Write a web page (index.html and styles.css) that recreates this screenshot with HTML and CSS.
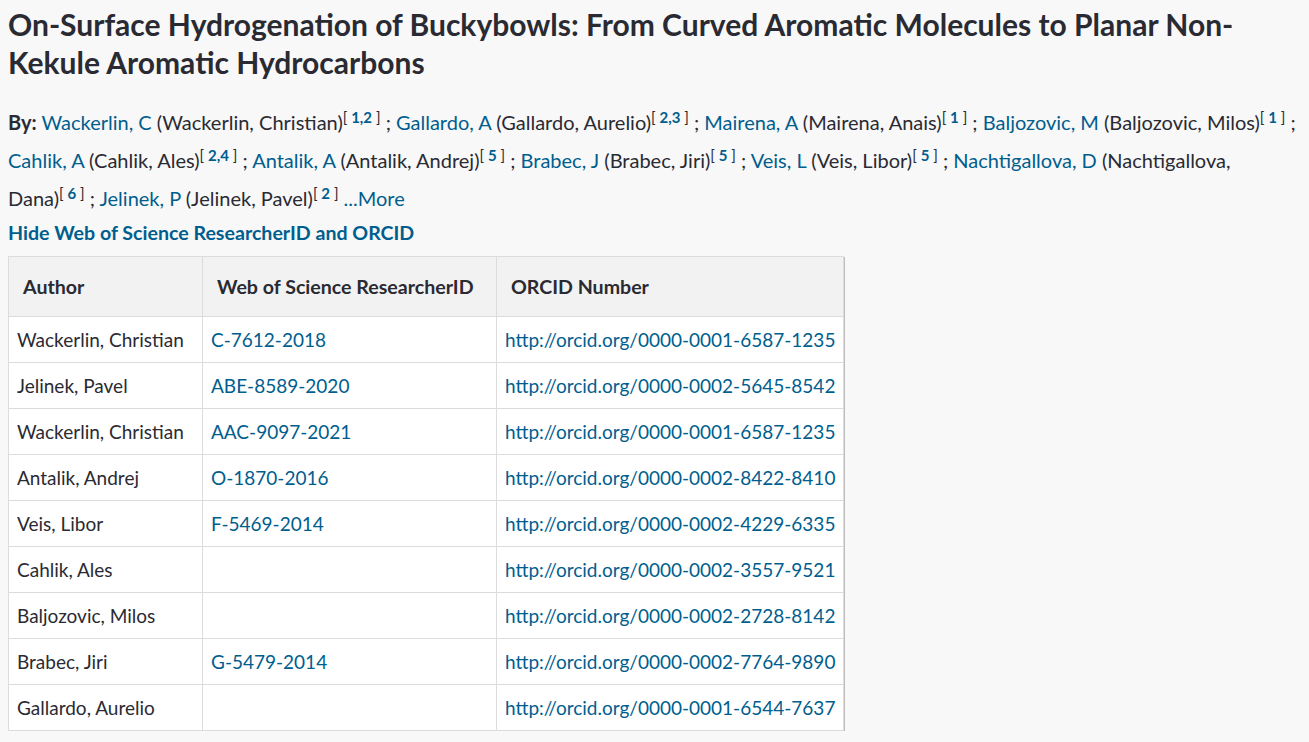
FILE: index.html
```html
<!DOCTYPE html>
<html>
<head>
<meta charset="utf-8">
<link rel="stylesheet" href="styles.css">
</head>
<body>
<div class="page">
  <h1 class="title">On-Surface Hydrogenation of Buckybowls: From Curved Aromatic Molecules to Planar Non-Kekule Aromatic Hydrocarbons</h1>
  <p class="authors"><span class="by">By:</span> <a class="lnk">Wackerlin, C</a> (Wackerlin, <span class="nw">Christian)<sup><span class="br">[</span> <b>1,2</b> <span class="br">]</span></sup> ;</span> <a class="lnk">Gallardo, A</a> (Gallardo, <span class="nw">Aurelio)<sup><span class="br">[</span> <b>2,3</b> <span class="br">]</span></sup> ;</span> <a class="lnk">Mairena, A</a> (Mairena, <span class="nw">Anais)<sup><span class="br">[</span> <b>1</b> <span class="br">]</span></sup> ;</span> <a class="lnk">Baljozovic, M</a> (Baljozovic, <span class="nw">Milos)<sup><span class="br">[</span> <b>1</b> <span class="br">]</span></sup> ;</span> <a class="lnk">Cahlik, A</a> (Cahlik, <span class="nw">Ales)<sup><span class="br">[</span> <b>2,4</b> <span class="br">]</span></sup> ;</span> <a class="lnk">Antalik, A</a> (Antalik, <span class="nw">Andrej)<sup><span class="br">[</span> <b>5</b> <span class="br">]</span></sup> ;</span> <a class="lnk">Brabec, J</a> (Brabec, <span class="nw">Jiri)<sup><span class="br">[</span> <b>5</b> <span class="br">]</span></sup> ;</span> <a class="lnk">Veis, L</a> (Veis, <span class="nw">Libor)<sup><span class="br">[</span> <b>5</b> <span class="br">]</span></sup> ;</span> <a class="lnk">Nachtigallova, D</a> (Nachtigallova, <span class="nw">Dana)<sup><span class="br">[</span> <b>6</b> <span class="br">]</span></sup> ;</span> <a class="lnk">Jelinek, P</a> (Jelinek, <span class="nw">Pavel)<sup><span class="br">[</span> <b>2</b> <span class="br">]</span></sup></span> <a class="lnk">...More</a></p>
  <a class="hide">Hide Web of Science ResearcherID and ORCID</a>
  <table class="ids">
    <thead>
      <tr><th class="c1">Author</th><th class="c2">Web of Science ResearcherID</th><th class="c3">ORCID Number</th></tr>
    </thead>
    <tbody>
      <tr><td>Wackerlin, Christian</td><td><a class="lnk">C-7612-2018</a></td><td><a class="lnk">http://orcid.org/0000-0001-6587-1235</a></td></tr>
      <tr><td>Jelinek, Pavel</td><td><a class="lnk">ABE-8589-2020</a></td><td><a class="lnk">http://orcid.org/0000-0002-5645-8542</a></td></tr>
      <tr><td>Wackerlin, Christian</td><td><a class="lnk">AAC-9097-2021</a></td><td><a class="lnk">http://orcid.org/0000-0001-6587-1235</a></td></tr>
      <tr><td>Antalik, Andrej</td><td><a class="lnk">O-1870-2016</a></td><td><a class="lnk">http://orcid.org/0000-0002-8422-8410</a></td></tr>
      <tr><td>Veis, Libor</td><td><a class="lnk">F-5469-2014</a></td><td><a class="lnk">http://orcid.org/0000-0002-4229-6335</a></td></tr>
      <tr><td>Cahlik, Ales</td><td></td><td><a class="lnk">http://orcid.org/0000-0002-3557-9521</a></td></tr>
      <tr><td>Baljozovic, Milos</td><td></td><td><a class="lnk">http://orcid.org/0000-0002-2728-8142</a></td></tr>
      <tr><td>Brabec, Jiri</td><td><a class="lnk">G-5479-2014</a></td><td><a class="lnk">http://orcid.org/0000-0002-7764-9890</a></td></tr>
      <tr><td>Gallardo, Aurelio</td><td></td><td><a class="lnk">http://orcid.org/0000-0001-6544-7637</a></td></tr>
    </tbody>
  </table>
</div>
</body>
</html>
```

FILE: styles.css
```css
html, body {
  margin: 0;
  padding: 0;
  background: #f8f8f8;
}
body {
  font-family: "Lato", "Liberation Sans", sans-serif;
  color: #2a2a33;
}
.page {
  padding: 5px 8px 0 8px;
}
.title {
  margin: 0;
  font-size: 30px;
  font-weight: 700;
  line-height: 38px;
  color: #2a2a33;
}
.authors {
  margin: 22px 0 0 0;
  font-size: 20px;
  line-height: 38px;
}
.by {
  font-weight: 700;
}
.nw {
  white-space: nowrap;
}
.lnk {
  color: #005e8e;
  text-decoration: none;
}
sup {
  font-size: 15px;
  line-height: 0;
  vertical-align: 7px;
}
sup b {
  color: #005e8e;
  font-weight: 700;
}
.hide {
  display: block;
  color: #005e8e;
  font-size: 19.6px;
  font-weight: 700;
  line-height: 24px;
  margin-top: 4px;
}
.ids {
  margin-top: 11px;
  border-collapse: collapse;
  border: 1px solid #c2c2c2;
  box-shadow: 1px 1px 0 #bdbdbd;
  font-size: 19px;
  background: #fff;
}
.ids th {
  background: #f2f2f2;
  text-align: left;
  font-weight: 700;
  font-size: 19.6px;
  height: 59px;
  padding: 0 14px;
  border: 1px solid #dcdcdc;
}
.ids td {
  height: 45px;
  padding: 0 8px;
  border: 1px solid #dcdcdc;
  white-space: nowrap;
}
.c1 { width: 165px; }
.c2 { width: 265px; }
.c3 { width: 318px; }
```
